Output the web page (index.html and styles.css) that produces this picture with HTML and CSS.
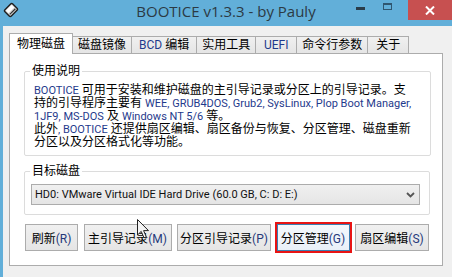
FILE: index.html
```html
<!DOCTYPE html>
<html lang="zh-CN">
<head>
    <meta charset="UTF-8">
    <title>BOOTICE v1.3.3 - by Pauly</title>
    <link rel="stylesheet" href="styles.css">
</head>
<body>
    <div class="window">
        <div class="titlebar">
            <div class="title-left">
                <svg class="app-icon" width="16" height="16" viewBox="0 0 16 16">
                    <g transform="rotate(-45 8 8)">
                        <rect x="2.5" y="3.5" width="11" height="9" rx="1.5" fill="#d8d8d8" stroke="#1e1e1e" stroke-width="1.4"/>
                        <rect x="4" y="4.8" width="8" height="3.6" fill="#ffffff"/>
                        <line x1="4" y1="10.2" x2="12" y2="10.2" stroke="#333" stroke-width="1.2"/>
                    </g>
                </svg>
            </div>
            <div class="title">BOOTICE v1.3.3 - by Pauly</div>
            <div class="controls">
                <span class="ctl ctl-min"><i></i></span>
                <span class="ctl ctl-max"><i></i></span>
                <span class="ctl ctl-close">
                    <svg width="10" height="9" viewBox="0 0 10 9">
                        <path d="M1 0.5 L9 8.5 M9 0.5 L1 8.5" stroke="#fff" stroke-width="2"/>
                    </svg>
                </span>
            </div>
        </div>

        <div class="client">
            <div class="tabs">
                <div class="tab active">物理磁盘</div>
                <div class="tab">磁盘镜像</div>
                <div class="tab tab-bcd"><span class="en">BCD</span> 编辑</div>
                <div class="tab">实用工具</div>
                <div class="tab"><span class="en">UEFI</span></div>
                <div class="tab">命令行参数</div>
                <div class="tab">关于</div>
            </div>

            <div class="panel">
                <fieldset class="group group-about">
                    <legend>使用说明</legend>
                    <p class="about-text">
                        <span class="en">BOOTICE</span> 可用于安装和维护磁盘的主引导记录或分区上的引导记录。支<br>
                        持的引导程序主要有 <span class="en">WEE, GRUB4DOS, Grub2, SysLinux, Plop Boot Manager,</span><br>
                        <span class="en">1JF9, MS-DOS</span> 及 <span class="en">Windows NT 5/6</span> 等。<br>
                        此外<span class="en">, BOOTICE</span> 还提供扇区编辑、扇区备份与恢复、分区管理、磁盘重新<br>
                        分区以及分区格式化等功能。
                    </p>
                </fieldset>

                <fieldset class="group group-disk">
                    <legend>目标磁盘</legend>
                    <div class="combo">
                        <span class="combo-text">HD0: VMware Virtual IDE Hard Drive (60.0 GB, C: D: E:)</span>
                        <svg class="combo-arrow" width="9" height="6" viewBox="0 0 9 6">
                            <path d="M1 1 L4.5 4.5 L8 1" fill="none" stroke="#555" stroke-width="1.8"/>
                        </svg>
                    </div>
                </fieldset>

                <div class="buttons">
                    <button class="btn">刷新<span class="en">(R)</span></button>
                    <button class="btn">主引导记录<span class="en">(M)</span></button>
                    <button class="btn">分区引导记录<span class="en">(P)</span></button>
                    <button class="btn btn-marked">分区管理<span class="en">(G)</span></button>
                    <button class="btn">扇区编辑<span class="en">(S)</span></button>
                </div>
            </div>
        </div>

        <!-- mouse pointer left in the shot -->
        <svg class="cursor" width="13" height="20" viewBox="0 0 13 20">
            <path d="M0.5 0.5 L0.5 16 L4.2 12.4 L7 18.8 L9.3 17.8 L6.6 11.6 L11.5 11.6 Z" fill="#f4f4f4" stroke="#222" stroke-width="1"/>
        </svg>
    </div>
</body>
</html>
```

FILE: styles.css
```css
body {
    margin: 0;
    background-color: #f0f0f0;
    font-family: Roboto, "Noto Sans CJK SC", sans-serif;
    font-size: 12px;
    color: #000;
}
.en {
    font-size: 11px;
}
.window {
    position: relative;
    width: 452px;
    height: 277px;
    overflow: hidden;
    background-color: #f0f0f0;
}
.titlebar {
    height: 26px;
    background-color: #62afd9;
    display: grid;
    grid-template-columns: 1fr auto 1fr;
    align-items: start;
}
.title-left {
    padding: 2px 0 0 3px;
}
.app-icon {
    display: block;
}
.title {
    font-family: "Open Sans", sans-serif;
    font-size: 15px;
    line-height: 20px;
    padding-top: 1px;
    color: #2c3a44;
}
.controls {
    display: flex;
    justify-content: flex-end;
}
.ctl {
    height: 20px;
    display: flex;
    align-items: flex-start;
    justify-content: center;
}
.ctl-min {
    width: 27px;
}
.ctl-min i {
    display: block;
    width: 9px;
    height: 3px;
    margin-top: 7px;
    background-color: #2a3d4a;
}
.ctl-max {
    width: 26px;
    margin-right: 8px;
}
.ctl-max i {
    display: block;
    width: 7px;
    height: 4px;
    margin-top: 3px;
    border: 1px solid #2f5670;
    border-top-width: 2px;
}
.ctl-close {
    width: 44px;
    background-color: #c75050;
    align-items: center;
}
.ctl-close svg {
    display: block;
}

.client {
    height: 251px;
    border-left: 3px solid #62afd9;
    padding-top: 7px;
    box-sizing: border-box;
}
.tabs {
    display: flex;
    align-items: flex-end;
    height: 20px;
    padding-left: 6px;
}
.tab {
    position: relative;
    height: 17px;
    min-width: 42px;
    box-sizing: border-box;
    padding: 1px 5px 0;
    margin-left: -1px;
    line-height: 15px;
    text-align: center;
    white-space: nowrap;
    border: 1px solid #acacac;
    border-bottom: none;
    background: linear-gradient(#f0f0f0, #e5e5e5);
}
.tab-bcd {
    padding: 1px 7px 0;
}
.tab.active {
    z-index: 1;
    height: 21px;
    margin: 0 0 -1px 0;
    padding: 0 7px;
    line-height: 20px;
    background: #fff;
}
.tab .en {
    font-size: 12px;
    color: #1f3a8c;
}

.panel {
    margin: 0 9px 0 6px;
    height: 213px;
    box-sizing: border-box;
    padding-top: 10px;
    border: 1px solid #acacac;
    background-color: #fff;
}
.group {
    margin: 0;
    border: 1px solid #dcdcdc;
    border-radius: 2px;
    min-inline-size: 0;
}
.group legend {
    padding: 0 2px;
    margin-left: -1px;
    line-height: 14px;
}
.group-about {
    margin: 0 11px 0 14px;
    padding: 6px 6px 6px 6px;
}
.about-text {
    margin: 0 0 0 3px;
    line-height: 13px;
    white-space: nowrap;
}
.about-text .en {
    color: #1f3a8c;
}
.group-disk {
    margin: 8px 12px 0 14px;
    padding: 6px 9px 9px 6px;
}
.combo {
    height: 21px;
    box-sizing: border-box;
    border: 1px solid #acacac;
    background: linear-gradient(#f0f0f0, #e5e5e5);
    display: flex;
    align-items: center;
    justify-content: space-between;
    padding: 0 4px 0 3px;
}
.combo-text {
    font-size: 11px;
    white-space: nowrap;
    color: #111;
}
.combo-arrow {
    display: block;
}

.buttons {
    margin: 9px 13px 0 15px;
    display: grid;
    grid-template-columns: 53px 88px 94px 73px 74px;
    justify-content: space-between;
}
.btn {
    height: 27px;
    padding: 0;
    font-family: inherit;
    font-size: 12px;
    color: #000;
    white-space: nowrap;
    border: 1px solid #acacac;
    background: linear-gradient(#f0f0f0, #e5e5e5);
}
.btn .en {
    font-size: 12px;
    color: #25397a;
}
.btn-marked {
    border-color: #3c7fb1;
    background: linear-gradient(#f4f8fc, #e9f0f8);
    outline: 2px solid #e81414;
}

.cursor {
    position: absolute;
    left: 137px;
    top: 219px;
}
```
